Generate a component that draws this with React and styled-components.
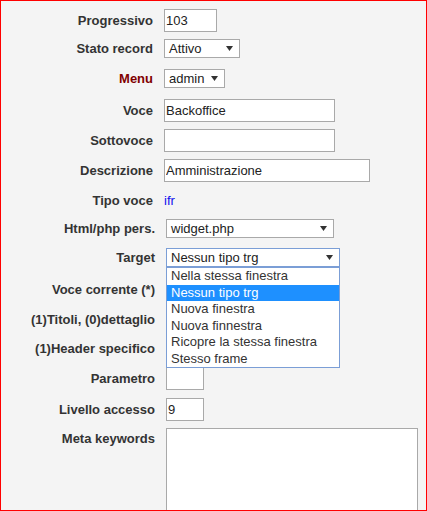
import React from "react";
import styled, { createGlobalStyle } from "styled-components";

const Global = createGlobalStyle`
  html, body { margin: 0; padding: 0; background: #fff; }
  body { font-family: "Liberation Sans", Arial, sans-serif; }
`;

const Frame = styled.div`
  width: 427px;
  height: 511px;
  box-sizing: border-box;
  border: 1px solid #ff0000;
  background: #f4f4f4;
  overflow: hidden;
  padding-top: 4px;
`;

const Section = styled.div`
  display: flex;
  flex-direction: column;
`;

const Row = styled.div`
  display: grid;
  grid-template-columns: ${(p) => p.$label}px auto;
  column-gap: 11px;
  align-items: ${(p) => (p.$top ? "start" : "center")};
  height: ${(p) => (p.$h ? `${p.$h}px` : "auto")};
  padding-top: ${(p) => (p.$top ? "4px" : "0")};
`;

const Label = styled.div`
  font: bold 13px "Liberation Sans", Arial, sans-serif;
  color: ${(p) => (p.$accent ? "#800000" : "#333")};
  text-align: right;
  white-space: nowrap;
  padding-top: ${(p) => (p.$top ? "3px" : "0")};
`;

const Cell = styled.div`
  display: flex;
  align-items: center;
  position: relative;
`;

const TextInput = styled.input`
  width: ${(p) => p.$w}px;
  height: 23px;
  box-sizing: border-box;
  border: 1px solid #a9a9a9;
  background: #fff;
  padding: 0 1px;
  margin: 0;
  font: 13px "Liberation Sans", Arial, sans-serif;
  color: #222;
  outline: none;
`;

const Value = styled.span`
  font: 13px "Liberation Sans", Arial, sans-serif;
  color: #1010ee;
`;

const SelectBox = styled.div`
  width: ${(p) => p.$w}px;
  height: 19px;
  box-sizing: border-box;
  border: 1px solid ${(p) => (p.$focus ? "#7b9ed6" : "#a9a9a9")};
  background: #fff;
  display: flex;
  align-items: center;
  justify-content: space-between;
  padding: 0 6px 0 4px;
  font: 13px "Liberation Sans", Arial, sans-serif;
  color: #222;
  white-space: nowrap;
`;

const Arrow = () => (
  <svg width="7" height="5" viewBox="0 0 7 5" aria-hidden="true">
    <polygon points="0,0 7,0 3.5,5" fill="#333" />
  </svg>
);

const Dropdown = styled.ul`
  position: absolute;
  top: 19px;
  left: 0;
  width: 174px;
  box-sizing: border-box;
  margin: 0;
  padding: 0;
  list-style: none;
  border: 1px solid #7b9ed6;
  background: #fff;
  z-index: 2;
`;

const Option = styled.li`
  height: 16.5px;
  line-height: 16.5px;
  padding-left: 4px;
  font: 13px "Liberation Sans", Arial, sans-serif;
  line-height: 16.5px;
  color: ${(p) => (p.$active ? "#fff" : "#333")};
  background: ${(p) => (p.$active ? "#1e90ff" : "transparent")};
  white-space: nowrap;
`;

const TextArea = styled.textarea`
  width: 252px;
  height: 130px;
  box-sizing: border-box;
  border: 1px solid #a9a9a9;
  background: #fff;
  margin: 0;
  resize: none;
  font: 13px "Liberation Sans", Arial, sans-serif;
  outline: none;
`;

const Select = ({ w, value, focus }) => (
  <SelectBox $w={w} $focus={focus}>
    <span>{value}</span>
    <Arrow />
  </SelectBox>
);

const options = [
  "Nella stessa finestra",
  "Nessun tipo trg",
  "Nuova finestra",
  "Nuova finnestra",
  "Ricopre la stessa finestra",
  "Stesso frame",
];

export default function App() {
  return (
    <>
      <Global />
      <Frame>
        <Section>
          <Row $label={152} $h={31}>
            <Label>Progressivo</Label>
            <Cell><TextInput $w={53} defaultValue="103" /></Cell>
          </Row>
          <Row $label={152} $h={24}>
            <Label>Stato record</Label>
            <Cell><Select w={76} value="Attivo" /></Cell>
          </Row>
          <Row $label={152} $h={36}>
            <Label $accent>Menu</Label>
            <Cell><Select w={61} value="admin" /></Cell>
          </Row>
          <Row $label={152} $h={28}>
            <Label>Voce</Label>
            <Cell><TextInput $w={171} defaultValue="Backoffice" /></Cell>
          </Row>
          <Row $label={152} $h={33}>
            <Label>Sottovoce</Label>
            <Cell><TextInput $w={171} defaultValue="" /></Cell>
          </Row>
          <Row $label={152} $h={27}>
            <Label>Descrizione</Label>
            <Cell><TextInput $w={206} defaultValue="Amministrazione" /></Cell>
          </Row>
          <Row $label={152} $h={32}>
            <Label>Tipo voce</Label>
            <Cell><Value>ifr</Value></Cell>
          </Row>
        </Section>
        <Section>
          <Row $label={154} $h={25}>
            <Label>Html/php pers.</Label>
            <Cell><Select w={168} value="widget.php" /></Cell>
          </Row>
          <Row $label={154} $h={33}>
            <Label>Target</Label>
            <Cell>
              <Select w={174} value="Nessun tipo trg" focus />
              <Dropdown>
                {options.map((o) => (
                  <Option key={o} $active={o === "Nessun tipo trg"}>{o}</Option>
                ))}
              </Dropdown>
            </Cell>
          </Row>
          <Row $label={154} $h={30}>
            <Label>Voce corrente (*)</Label>
            <Cell><TextInput $w={38} defaultValue="" /></Cell>
          </Row>
          <Row $label={154} $h={30}>
            <Label>(1)Titoli, (0)dettaglio</Label>
            <Cell><TextInput $w={38} defaultValue="" /></Cell>
          </Row>
          <Row $label={154} $h={28}>
            <Label>(1)Header specifico</Label>
            <Cell><TextInput $w={38} defaultValue="" /></Cell>
          </Row>
          <Row $label={154} $h={33}>
            <Label>Parametro</Label>
            <Cell><TextInput $w={38} defaultValue="" /></Cell>
          </Row>
          <Row $label={154} $h={29}>
            <Label>Livello accesso</Label>
            <Cell><TextInput $w={38} defaultValue="9" /></Cell>
          </Row>
          <Row $label={154} $top>
            <Label $top>Meta keywords</Label>
            <Cell><TextArea /></Cell>
          </Row>
        </Section>
      </Frame>
    </>
  );
}
